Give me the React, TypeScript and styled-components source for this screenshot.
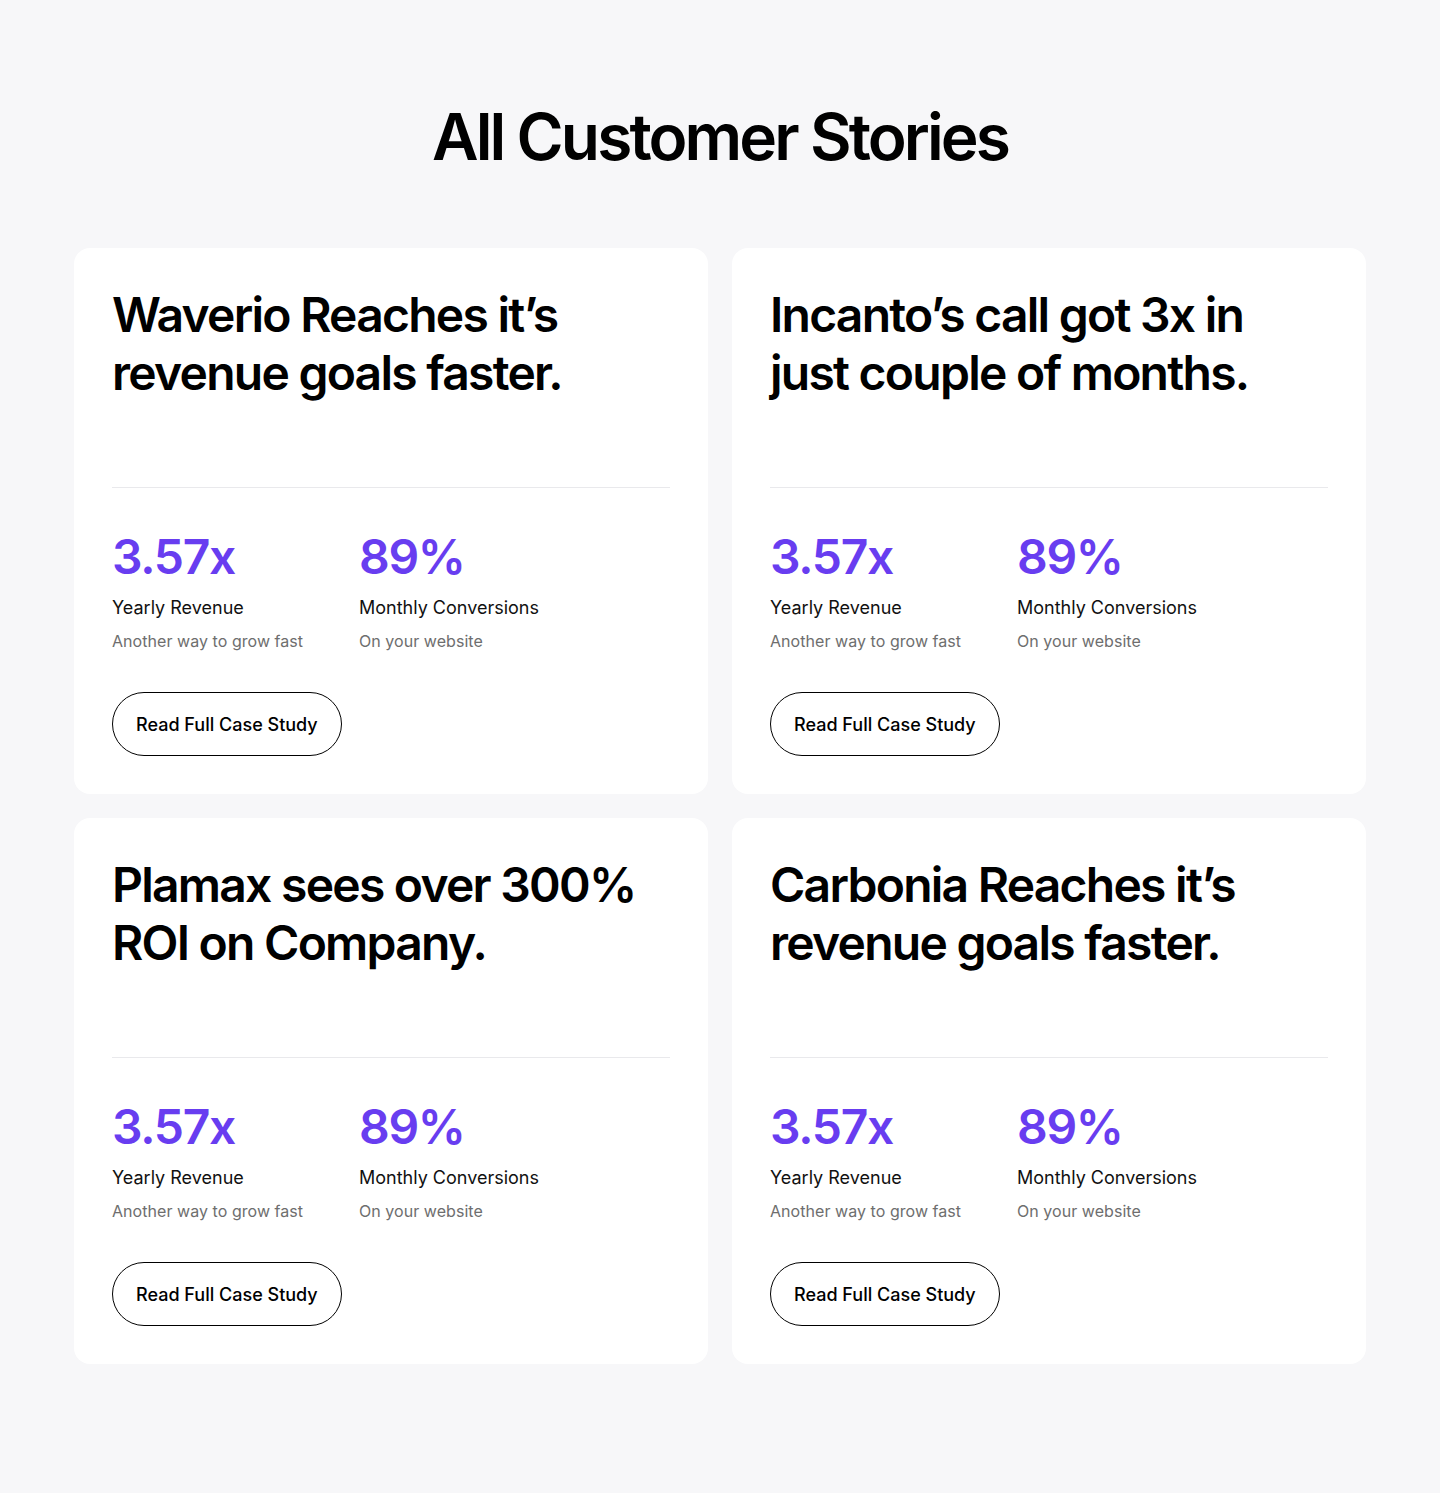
import React from 'react';
import styled, { createGlobalStyle } from 'styled-components';

const GlobalStyle = createGlobalStyle`
  * {
    box-sizing: border-box;
  }
  body {
    margin: 0;
    background: #f7f7f9;
    font-family: Inter, 'Noto Sans', sans-serif;
    color: #000;
  }
`;

const Page = styled.main`
  min-height: 1493px;
  padding: 104px 74px 0;
`;

const Heading = styled.h1`
  margin: 0 0 78px;
  text-align: center;
  font-size: 64px;
  line-height: 66px;
  font-weight: 600;
  letter-spacing: -2.9px;
`;

const Grid = styled.div`
  display: grid;
  grid-template-columns: repeat(2, 1fr);
  gap: 24px;
`;

const Card = styled.article`
  background: #fff;
  border-radius: 16px;
  padding: 38px;
  display: flex;
  flex-direction: column;
`;

const Title = styled.h2`
  margin: 0;
  min-height: 201px;
  font-size: 48px;
  line-height: 58px;
  font-weight: 600;
  letter-spacing: -1.75px;
`;

const Divider = styled.hr`
  margin: 0;
  border: 0;
  border-top: 1px solid #e9e9ec;
`;

const Stats = styled.div`
  display: grid;
  grid-template-columns: 247px 1fr;
  margin-top: 40px;
`;

const Stat = styled.div`
  display: flex;
  flex-direction: column;
`;

const Value = styled.div`
  font-size: 48px;
  line-height: 58px;
  font-weight: 600;
  letter-spacing: -1.3px;
  color: #683df0;
`;

const Label = styled.div`
  margin-top: 8px;
  font-size: 18px;
  line-height: 27px;
  color: #111;
`;

const Note = styled.div`
  margin-top: 8px;
  font-size: 16px;
  line-height: 24px;
  letter-spacing: 0.05px;
  color: #6e6e6e;
`;

const Button = styled.button`
  align-self: flex-start;
  margin-top: 39px;
  height: 64px;
  padding: 0 23px;
  border: 1.5px solid #000;
  border-radius: 999px;
  background: transparent;
  font-family: Inter, 'Noto Sans', sans-serif;
  font-size: 18px;
  font-weight: 500;
  color: #000;
  cursor: pointer;
`;

const stories: [string, string][] = [
  ['Waverio Reaches it’s', 'revenue goals faster.'],
  ['Incanto’s call got 3x in', 'just couple of months.'],
  ['Plamax sees over 300%', 'ROI on Company.'],
  ['Carbonia Reaches it’s', 'revenue goals faster.'],
];

const App = () => {
  return (
    <>
      <GlobalStyle />
      <Page>
        <Heading>All Customer Stories</Heading>
        <Grid>
          {stories.map(([first, second]) => (
            <Card key={first + second}>
              <Title>
                {first}
                <br />
                {second}
              </Title>
              <Divider />
              <Stats>
                <Stat>
                  <Value>3.57x</Value>
                  <Label>Yearly Revenue</Label>
                  <Note>Another way to grow fast</Note>
                </Stat>
                <Stat>
                  <Value>89%</Value>
                  <Label>Monthly Conversions</Label>
                  <Note>On your website</Note>
                </Stat>
              </Stats>
              <Button>Read Full Case Study</Button>
            </Card>
          ))}
        </Grid>
      </Page>
    </>
  );
};

export default App;
